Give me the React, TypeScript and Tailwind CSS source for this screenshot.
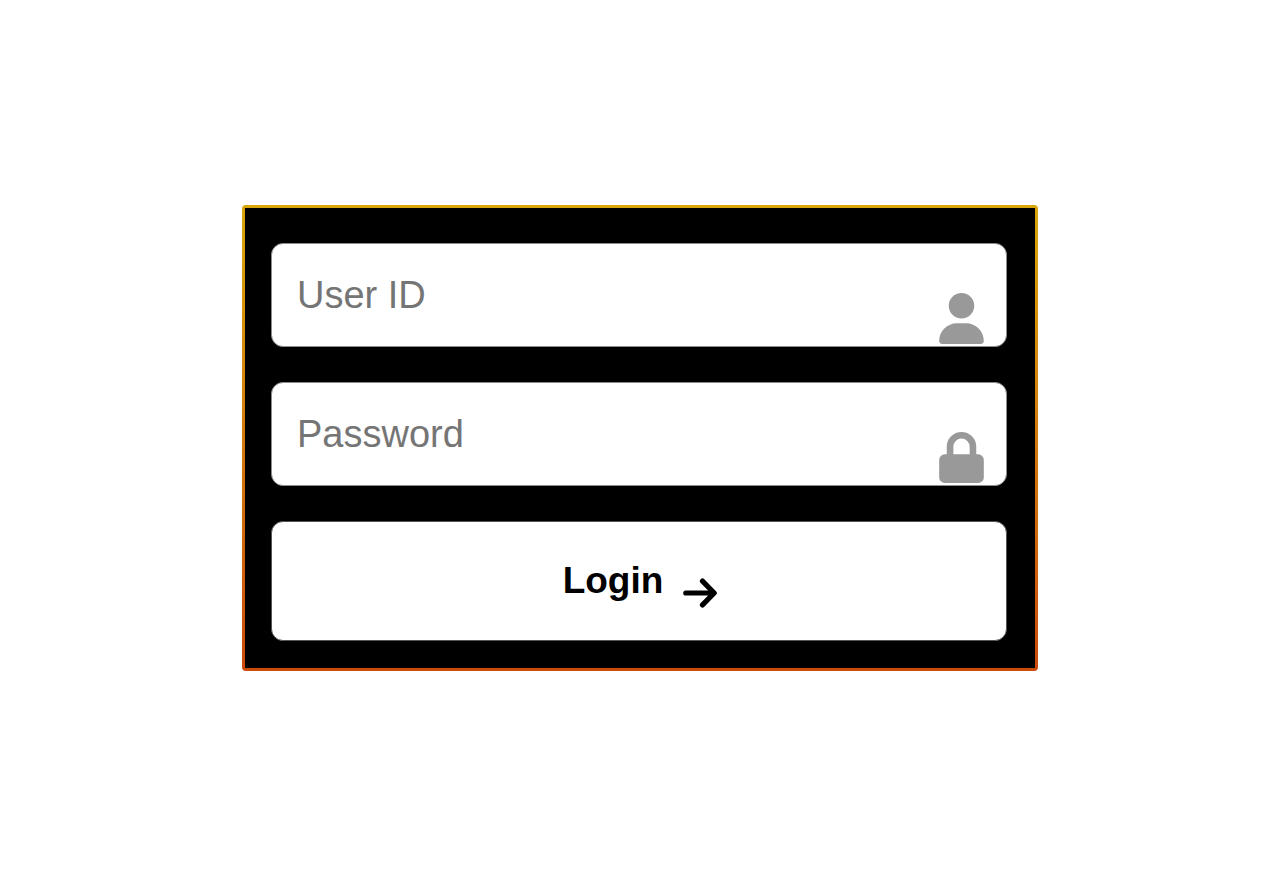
import type { ReactNode } from "react";
import { FaUser } from "react-icons/fa6";

type FieldProps = {
  id: string;
  label: string;
  type: string;
  autoComplete: string;
  icon: ReactNode;
};

function LockIcon() {
  return (
    <svg viewBox="0 0 448 512" fill="currentColor" className="h-[51px] w-[45px]" aria-hidden="true">
      <path d="M76 224v-76a148 148 0 0 1 296 0v76h20a56 56 0 0 1 56 56v176a56 56 0 0 1-56 56H56a56 56 0 0 1-56-56V280a56 56 0 0 1 56-56h20zm66 0h164v-76a82 82 0 0 0-164 0z" />
    </svg>
  );
}

function ArrowIcon() {
  return (
    <svg
      viewBox="0 0 34 30"
      fill="none"
      stroke="currentColor"
      strokeWidth="5.2"
      strokeLinecap="round"
      strokeLinejoin="round"
      className="h-[30px] w-[34px]"
      aria-hidden="true"
    >
      <path d="M2.8 15H31M19.5 3.1L31.2 15L19.5 26.9" />
    </svg>
  );
}

function Field({ id, label, type, autoComplete, icon }: FieldProps) {
  return (
    <div className="flex h-[104px] rounded-xl border border-[#8c8c8c] bg-white pr-[22px] pl-[25px]">
      <input
        id={id}
        name={id}
        type={type}
        aria-label={label}
        autoComplete={autoComplete}
        placeholder={label}
        className="min-w-0 flex-1 bg-transparent text-[38px] text-black outline-none placeholder:text-[#757575]"
      />
      <span className="self-end pb-0.5 text-[#999999]">{icon}</span>
    </div>
  );
}

export default function App() {
  return (
    <main className="flex min-h-screen items-center justify-center bg-white font-['Liberation_Sans',Arial,sans-serif]">
      <div className="w-full max-w-[796px] rounded-sm bg-linear-to-b from-[#d8a60c] to-[#cc4a0a] p-[3px]">
        <form
          onSubmit={(event) => event.preventDefault()}
          className="flex flex-col gap-[35px] bg-black pt-[35px] pr-7 pb-[27px] pl-[26px]"
        >
          <Field
            id="user-id"
            label="User ID"
            type="text"
            autoComplete="username"
            icon={<FaUser className="h-[51px] w-[45px]" aria-hidden="true" />}
          />
          <Field
            id="password"
            label="Password"
            type="password"
            autoComplete="current-password"
            icon={<LockIcon />}
          />
          <button
            type="submit"
            className="flex h-[120px] items-center justify-center gap-5 rounded-xl border border-[#555555] bg-white pl-0.5 text-[37px] font-bold text-black"
          >
            Login
            <span className="pt-6">
              <ArrowIcon />
            </span>
          </button>
        </form>
      </div>
    </main>
  );
}
